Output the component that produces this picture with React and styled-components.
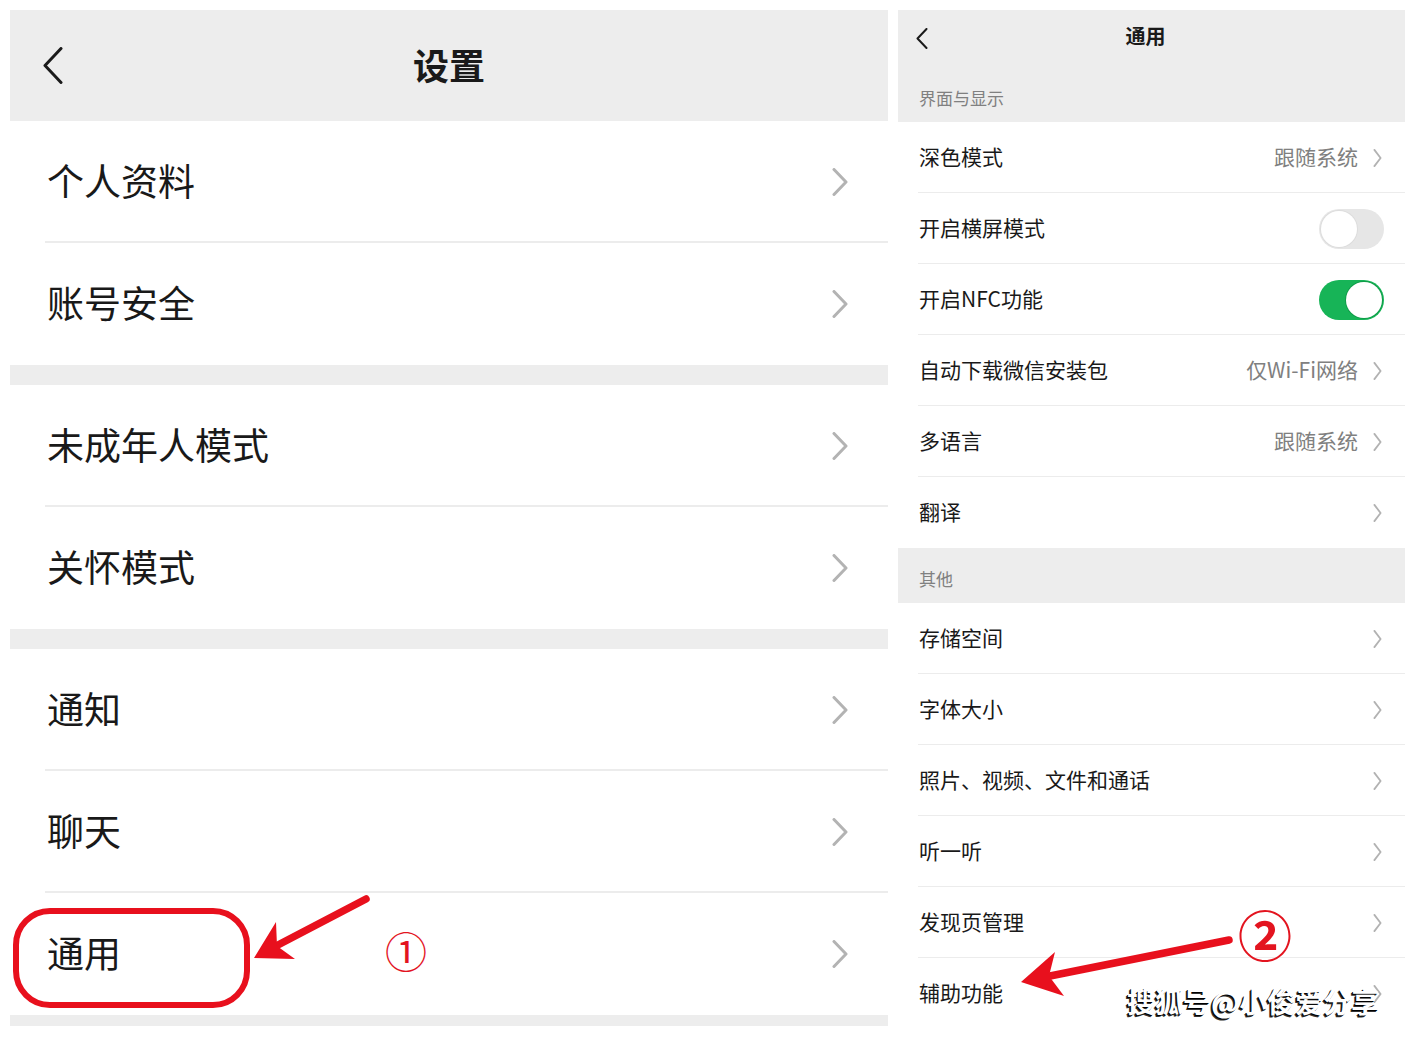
import React from "react";
import styled, { createGlobalStyle } from "styled-components";

const GlobalStyle = createGlobalStyle`
  html, body {
    margin: 0;
    padding: 0;
    background: #fff;
  }
  body {
    font-family: "Noto Sans CJK SC", "Noto Sans", sans-serif;
    color: #191919;
  }
`;

const Page = styled.div`
  position: relative;
  width: 1415px;
  height: 1037px;
  overflow: hidden;
  box-sizing: border-box;
  padding: 10px 0 0 10px;
  display: flex;
  gap: 10px;
  align-items: flex-start;
`;

const Screen = styled.div`
  width: ${(p) => p.$w}px;
  display: flex;
  flex-direction: column;
  background: #fff;
`;

/* ---------- left screen ---------- */

const BigHeader = styled.div`
  height: 111px;
  background: #ededed;
  display: grid;
  grid-template-columns: 1fr auto 1fr;
  align-items: center;
`;

const BackBtn = styled.div`
  padding-left: ${(p) => p.$pad}px;
  display: flex;
  align-items: center;
`;

const BigTitle = styled.h1`
  margin: 0 0 3px;
  font-size: 36px;
  font-weight: 700;
  color: #1a1a1a;
`;

const Group = styled.div`
  background: #fff;
  display: flex;
  flex-direction: column;
`;

const BigRow = styled.div`
  position: relative;
  height: 122px;
  box-sizing: border-box;
  padding: 0 40px 0 37px;
  display: flex;
  align-items: center;
  justify-content: space-between;
  font-size: 37px;
  color: #191919;

  & > span {
    margin-bottom: 4px;
  }

  &:not(:last-child)::after {
    content: "";
    position: absolute;
    left: 35px;
    right: 0;
    bottom: 0;
    height: 2px;
    background: #ececec;
  }
`;

const Spacer = styled.div`
  height: ${(p) => p.$h}px;
  background: #ededed;
`;

/* ---------- right screen ---------- */

const NavBar = styled.div`
  height: 56px;
  background: #ededed;
  display: grid;
  grid-template-columns: 1fr auto 1fr;
  align-items: center;
`;

const NavTitle = styled.div`
  font-size: 20px;
  font-weight: 700;
  color: #1a1a1a;
  margin: 0 0 5px -12px;
`;

const SectionLabel = styled.div`
  height: ${(p) => p.$h}px;
  box-sizing: border-box;
  background: #ededed;
  display: flex;
  align-items: flex-end;
  padding: 0 0 12px 21px;
  font-size: 17px;
  line-height: 24px;
  color: #808080;
`;

const Row = styled.div`
  position: relative;
  height: 71px;
  box-sizing: border-box;
  padding: 0 23px 0 21px;
  display: flex;
  align-items: center;
  justify-content: space-between;
  font-size: 21px;
  color: #191919;

  & > span {
    margin-bottom: 3px;
  }

  &:not(:last-child)::after {
    content: "";
    position: absolute;
    left: 20px;
    right: 0;
    bottom: 0;
    height: 1px;
    background: #ececec;
  }
`;

const Trail = styled.div`
  display: flex;
  align-items: center;
  gap: 15px;
  color: #808080;
  font-size: 21px;

  & > span {
    margin-bottom: 3px;
  }
`;

const Toggle = styled.div`
  position: relative;
  width: 65px;
  height: 40px;
  box-sizing: border-box;
  border-radius: 20px;
  margin-right: -2px;
  background: ${(p) => (p.$on ? "#17b457" : "#e6e6e6")};

  &::after {
    content: "";
    position: absolute;
    top: 2px;
    left: ${(p) => (p.$on ? "27px" : "2px")};
    width: 36px;
    height: 36px;
    border-radius: 50%;
    background: #fff;
    box-shadow: 0 0 0 1px ${(p) => (p.$on ? "#0f9c48" : "#dcdcdc")};
  }
`;

/* ---------- annotations ---------- */

const Overlay = styled.svg`
  position: absolute;
  left: 0;
  top: 0;
  pointer-events: none;
`;

const Circled = styled.span`
  position: absolute;
  left: ${(p) => p.$x}px;
  top: ${(p) => p.$y}px;
  font-size: ${(p) => p.$size}px;
  font-weight: ${(p) => p.$weight || 400};
  line-height: 1;
  color: #e3141f;
  font-family: "Noto Sans CJK SC", sans-serif;
`;

const Watermark = styled.span`
  position: absolute;
  left: 1127px;
  top: 985px;
  font-size: 28px;
  font-weight: 700;
  line-height: 1.2;
  color: #fff;
  font-family: "Noto Sans CJK SC", sans-serif;
  text-shadow: -1px 1px 0 #000, -2px 2px 0 #333;
  white-space: nowrap;
`;

const Chevron = ({ w, h, sw, color }) => (
  <svg width={w} height={h} viewBox={`0 0 ${w} ${h}`} fill="none">
    <polyline
      points={`${sw / 2 + 0.5},${sw / 2} ${w - sw / 2 - 0.5},${h / 2} ${sw / 2 + 0.5},${h - sw / 2}`}
      stroke={color}
      strokeWidth={sw}
      strokeLinecap="round"
      strokeLinejoin="round"
    />
  </svg>
);

const Back = ({ w, h, sw }) => (
  <svg width={w} height={h} viewBox={`0 0 ${w} ${h}`} fill="none">
    <polyline
      points={`${w - sw / 2 - 0.5},${sw / 2} ${sw / 2 + 0.5},${h / 2} ${w - sw / 2 - 0.5},${h - sw / 2}`}
      stroke="#1a1a1a"
      strokeWidth={sw}
      strokeLinecap="round"
      strokeLinejoin="round"
    />
  </svg>
);

const BigChevron = () => <Chevron w={16} h={28} sw={3} color="#b3b3b3" />;
const SmallChevron = () => <Chevron w={9} h={18} sw={1.8} color="#b2b2b2" />;

const leftGroups = [
  ["个人资料", "账号安全"],
  ["未成年人模式", "关怀模式"],
  ["通知", "聊天", "通用"],
];

const displayRows = [
  { label: "深色模式", value: "跟随系统" },
  { label: "开启横屏模式", toggle: "off" },
  { label: "开启NFC功能", toggle: "on" },
  { label: "自动下载微信安装包", value: "仅Wi-Fi网络" },
  { label: "多语言", value: "跟随系统" },
  { label: "翻译" },
];

const otherRows = [
  "存储空间",
  "字体大小",
  "照片、视频、文件和通话",
  "听一听",
  "发现页管理",
  "辅助功能",
];

function Arrows() {
  const red = "#e8101d";
  return (
    <Overlay width="1415" height="1037" viewBox="0 0 1415 1037">
      <rect x="16" y="911" width="231" height="94" rx="34" fill="none" stroke={red} strokeWidth="6" />
      {/* arrow 1 */}
      <line x1="366" y1="899" x2="276" y2="946" stroke={red} strokeWidth="7.5" strokeLinecap="round" />
      <polygon points="254,958 276,922 277,946 295,959" fill={red} />
      {/* arrow 2 */}
      <line x1="1229" y1="940" x2="1050" y2="976" stroke={red} strokeWidth="7.5" strokeLinecap="round" />
      <polygon points="1021,982 1055,952 1049,976 1064,996" fill={red} />
    </Overlay>
  );
}

export default function App() {
  return (
    <>
      <GlobalStyle />
      <Page>
        <Screen $w={878}>
          <BigHeader>
            <BackBtn $pad={33}>
              <Back w={20} h={37} sw={3} />
            </BackBtn>
            <BigTitle>设置</BigTitle>
            <div />
          </BigHeader>
          {leftGroups.map((g, gi) => (
            <React.Fragment key={gi}>
              {gi > 0 && <Spacer $h={20} />}
              <Group>
                {g.map((label) => (
                  <BigRow key={label}>
                    <span>{label}</span>
                    <BigChevron />
                  </BigRow>
                ))}
              </Group>
            </React.Fragment>
          ))}
          <Spacer $h={11} />
        </Screen>

        <Screen $w={507}>
          <NavBar>
            <BackBtn $pad={18}>
              <Back w={12} h={21} sw={2} />
            </BackBtn>
            <NavTitle>通用</NavTitle>
            <div />
          </NavBar>
          <SectionLabel $h={56}>界面与显示</SectionLabel>
          <Group>
            {displayRows.map((r) => (
              <Row key={r.label}>
                <span>{r.label}</span>
                {r.toggle ? (
                  <Toggle $on={r.toggle === "on"} />
                ) : (
                  <Trail>
                    {r.value && <span>{r.value}</span>}
                    <SmallChevron />
                  </Trail>
                )}
              </Row>
            ))}
          </Group>
          <SectionLabel $h={55}>其他</SectionLabel>
          <Group>
            {otherRows.map((label) => (
              <Row key={label}>
                <span>{label}</span>
                <Trail>
                  <SmallChevron />
                </Trail>
              </Row>
            ))}
          </Group>
        </Screen>

        <Arrows />
        <Circled $x={385} $y={929} $size={42}>①</Circled>
        <Circled $x={1238} $y={907} $size={54} $weight={700}>②</Circled>
        <Watermark>搜狐号@小俊爱分享</Watermark>
      </Page>
    </>
  );
}
